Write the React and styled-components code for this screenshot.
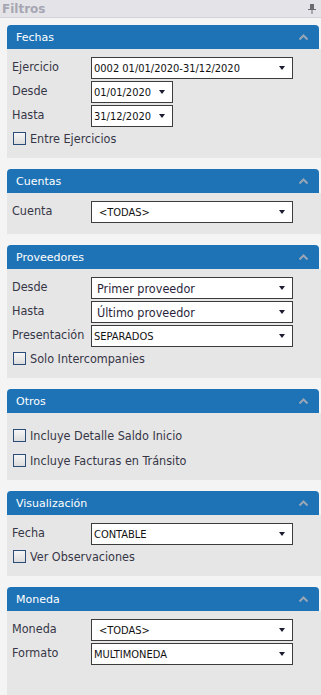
import React from 'react';
import styled, {createGlobalStyle} from 'styled-components';

const GlobalStyle = createGlobalStyle`
    html, body {
        margin : 0;
        padding : 0;
        background : #f4f4f4;
    }
    body {
        font-family : "DejaVu Sans Condensed", "DejaVu Sans", sans-serif;
    }
`

function PinIcon() {
    return (
        <svg width="8" height="10" viewBox="0 0 8 10">
            <rect x="2" y="0" width="4" height="5" fill="#6a6a72"/>
            <rect x="0" y="5" width="8" height="1" fill="#6a6a72"/>
            <rect x="3.5" y="6" width="1" height="4" fill="#6a6a72"/>
        </svg>
    )
}

function Chevron() {
    return (
        <svg width="9" height="6" viewBox="0 0 9 6">
            <path d="M0.5 5.5 L4.5 1.5 L8.5 5.5" fill="none" stroke="#9aa6b6" strokeWidth="2"/>
        </svg>
    )
}

function Panel({title, children, grow}) {
    return (
        <PanelBox grow={grow ? 1 : 0}>
            <PanelHeader>
                <span>{title}</span>
                <Chevron/>
            </PanelHeader>
            <PanelBody grow={grow ? 1 : 0}>{children}</PanelBody>
        </PanelBox>
    )
}

function Select({value, width, big, indent}) {
    return (
        <SelectBox width={width}>
            <SelectText big={big ? 1 : 0} indent={indent ? 1 : 0}>{value}</SelectText>
            <Arrow/>
        </SelectBox>
    )
}

function Field({label, ...rest}) {
    return (
        <Row>
            <Label>{label}</Label>
            <Select {...rest}/>
        </Row>
    )
}

function Check({label}) {
    return (
        <CheckRow>
            <Box/>
            <CheckLabel>{label}</CheckLabel>
        </CheckRow>
    )
}

export default function App() {
    return (
        <>
            <GlobalStyle/>
            <Page>
                <TitleBar>
                    <Title>Filtros</Title>
                    <PinIcon/>
                </TitleBar>
                <Panels>
                    <Panel title="Fechas">
                        <Field label="Ejercicio" value="0002 01/01/2020-31/12/2020" width={202}/>
                        <Field label="Desde" value="01/01/2020" width={82}/>
                        <Field label="Hasta" value="31/12/2020" width={82}/>
                        <Check label="Entre Ejercicios"/>
                    </Panel>
                    <Panel title="Cuentas">
                        <Field label="Cuenta" value="<TODAS>" width={202} indent/>
                    </Panel>
                    <Panel title="Proveedores">
                        <Field label="Desde" value="Primer proveedor" width={202} big/>
                        <Field label="Hasta" value="Último proveedor" width={202} big/>
                        <Field label="Presentación" value="SEPARADOS" width={202}/>
                        <Check label="Solo Intercompanies"/>
                    </Panel>
                    <Panel title="Otros">
                        <OtrosList>
                            <Check label="Incluye Detalle Saldo Inicio"/>
                            <Check label="Incluye Facturas en Tránsito"/>
                        </OtrosList>
                    </Panel>
                    <Panel title="Visualización">
                        <Field label="Fecha" value="CONTABLE" width={202}/>
                        <Check label="Ver Observaciones"/>
                    </Panel>
                    <Panel title="Moneda" grow>
                        <Field label="Moneda" value="<TODAS>" width={202} indent/>
                        <Field label="Formato" value="MULTIMONEDA" width={202}/>
                    </Panel>
                </Panels>
            </Page>
        </>
    )
}

const Page = styled.div`
    width : 321px;
    height : 695px;
    display : flex;
    flex-direction : column;
    overflow : hidden;
    background : #f4f4f4;
`
const TitleBar = styled.div`
    height : 17px;
    flex-shrink : 0;
    display : flex;
    align-items : center;
    justify-content : space-between;
    padding : 0 5px 0 2px;
    background : #e4e4e8;
    border-bottom : 1px solid #d2d2d8;
`
const Title = styled.span`
    font-family : "DejaVu Sans", sans-serif;
    font-size : 12px;
    font-weight : bold;
    color : #a6a6b2;
`
const Panels = styled.div`
    flex : 1;
    display : flex;
    flex-direction : column;
    gap : 11px;
    padding : 7px 0 0 7px;
`
const PanelBox = styled.div`
    display : flex;
    flex-direction : column;
    flex : ${props => props.grow ? 1 : 'none'};
`
const PanelHeader = styled.div`
    height : 24px;
    margin-right : 2px;
    display : flex;
    align-items : center;
    justify-content : space-between;
    padding : 0 11px 0 9px;
    background : #1e73b6;
    border-radius : 4px 4px 0 0;
    color : #ffffff;
    font-family : "DejaVu Sans", sans-serif;
    font-size : 11px;
`
const PanelBody = styled.div`
    flex : ${props => props.grow ? 1 : 'none'};
    display : flex;
    flex-direction : column;
    gap : 2px;
    padding : 8px 0 11px 5px;
    background : #e6e6e6;
`
const Row = styled.div`
    display : flex;
    align-items : center;
    height : 22px;
`
const Label = styled.div`
    width : 79px;
    flex-shrink : 0;
    font-size : 12.5px;
    color : #363646;
    margin-top : -3px;
    white-space : nowrap;
`
const SelectBox = styled.div`
    box-sizing : border-box;
    width : ${props => props.width}px;
    height : 22px;
    display : flex;
    align-items : center;
    justify-content : space-between;
    padding : 0 7px 0 2px;
    background : #ffffff;
    border : 1px solid #3c3c3c;
`
const SelectText = styled.span`
    font-size : ${props => props.big ? '12.5px' : '11px'};
    color : ${props => props.big ? '#2a1f3a' : '#111111'};
    padding-left : ${props => props.indent ? '5px' : props.big ? '3px' : '0'};
    white-space : nowrap;
`
const Arrow = styled.span`
    width : 0;
    height : 0;
    border-left : 3px solid transparent;
    border-right : 3px solid transparent;
    border-top : 4px solid #1c1c30;
`
const CheckRow = styled.div`
    display : flex;
    align-items : center;
    gap : 4px;
    height : 18px;
    padding-left : 1px;
`
const Box = styled.span`
    box-sizing : border-box;
    width : 13px;
    height : 13px;
    border : 1px solid #2b4c78;
    background : linear-gradient(#f6f6f6, #dcdcdc);
`
const CheckLabel = styled.span`
    font-size : 12.5px;
    color : #363646;
`
const OtrosList = styled.div`
    display : flex;
    flex-direction : column;
    gap : 7px;
    padding-top : 5px;
`
